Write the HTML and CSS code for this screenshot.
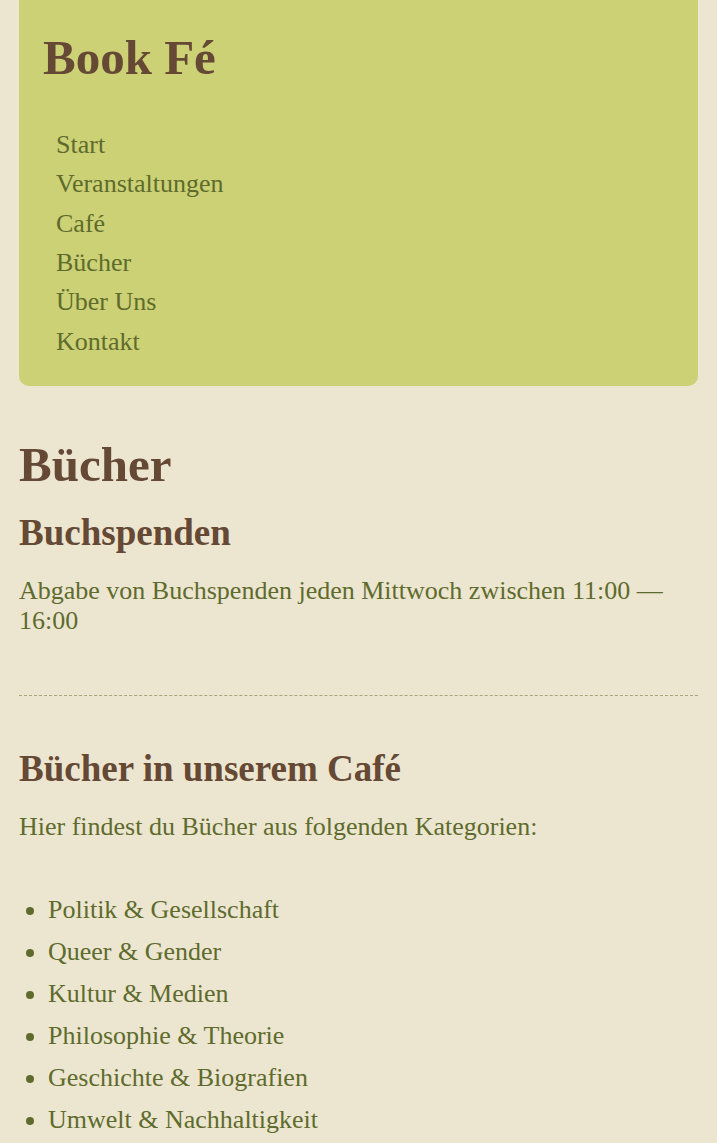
FILE: index.html
```html
<!DOCTYPE html>
<html lang="de">
<head>
<meta charset="utf-8">
<title>Bücher – Book Fé</title>
<link rel="stylesheet" href="styles.css">
</head>
<body>
<div class="page">
  <header class="site-header">
    <h1 class="logo">Book Fé</h1>
    <nav class="nav">
      <a href="#">Start</a>
      <a href="#">Veranstaltungen</a>
      <a href="#">Café</a>
      <a href="#">Bücher</a>
      <a href="#">Über Uns</a>
      <a href="#">Kontakt</a>
    </nav>
  </header>
  <main class="content">
    <h1 class="page-title">Bücher</h1>
    <h2 class="section-title first">Buchspenden</h2>
    <p class="text">Abgabe von Buchspenden jeden Mittwoch zwischen 11:00 — 16:00</p>
    <hr class="divider">
    <h2 class="section-title">Bücher in unserem Café</h2>
    <p class="text">Hier findest du Bücher aus folgenden Kategorien:</p>
    <ul class="categories">
      <li>Politik &amp; Gesellschaft</li>
      <li>Queer &amp; Gender</li>
      <li>Kultur &amp; Medien</li>
      <li>Philosophie &amp; Theorie</li>
      <li>Geschichte &amp; Biografien</li>
      <li>Umwelt &amp; Nachhaltigkeit</li>
    </ul>
  </main>
</div>
</body>
</html>
```
FILE: styles.css
```css
html, body {
  margin: 0;
  padding: 0;
}
body {
  background: #ece6d0;
  font-family: "Liberation Serif", "Times New Roman", serif;
  color: #5e6b2d;
}
.page {
  padding: 0 19px;
}
.site-header {
  background: #cbd174;
  border-radius: 0 0 10px 10px;
  padding: 29px 24px 25px 24px;
}
.logo {
  margin: 0;
  font-size: 49px;
  line-height: 1.2;
  font-weight: bold;
  color: #654935;
}
.nav {
  display: flex;
  flex-direction: column;
  margin-top: 37px;
  padding-left: 13px;
}
.nav a {
  font-size: 26px;
  line-height: 39.4px;
  color: #5e6b2d;
  text-decoration: none;
}
.content {
  padding-top: 50px;
}
.page-title {
  margin: 0;
  font-size: 49px;
  line-height: 1.2;
  font-weight: bold;
  color: #654935;
}
.section-title {
  margin: 51px 0 0 0;
  font-size: 37px;
  line-height: 1.2;
  font-weight: bold;
  color: #654935;
}
.section-title.first {
  margin-top: 15.5px;
}
.text {
  margin: 21px 0 0 0;
  font-size: 26px;
  line-height: 30px;
}
.divider {
  border: 0;
  border-top: 1px dashed #a7a47a;
  margin: 59px 0 0 0;
  height: 0;
}
.categories {
  margin: 47px 0 0 0;
  padding-left: 29px;
}
.categories li {
  font-size: 26px;
  line-height: 42px;
}
```
